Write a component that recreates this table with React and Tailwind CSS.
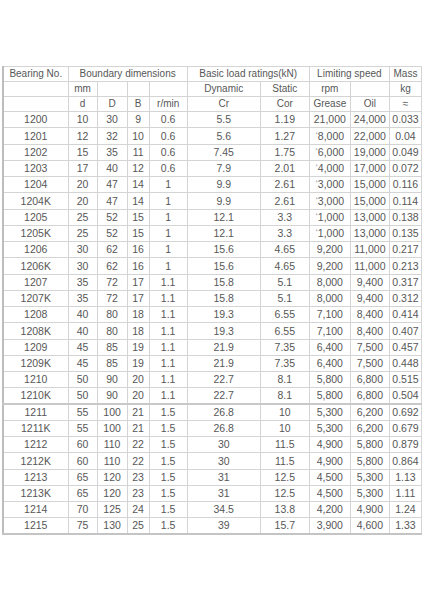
import React from "react";

const rows = [
  ["1200", "10", "30", "9", "0.6", "5.5", "1.19", "21,000", "24,000", "0.033"],
  ["1201", "12", "32", "10", "0.6", "5.6", "1.27", "18,000", "22,000", "0.04"],
  ["1202", "15", "35", "11", "0.6", "7.45", "1.75", "16,000", "19,000", "0.049"],
  ["1203", "17", "40", "12", "0.6", "7.9", "2.01", "14,000", "17,000", "0.072"],
  ["1204", "20", "47", "14", "1", "9.9", "2.61", "13,000", "15,000", "0.116"],
  ["1204K", "20", "47", "14", "1", "9.9", "2.61", "13,000", "15,000", "0.114"],
  ["1205", "25", "52", "15", "1", "12.1", "3.3", "11,000", "13,000", "0.138"],
  ["1205K", "25", "52", "15", "1", "12.1", "3.3", "11,000", "13,000", "0.135"],
  ["1206", "30", "62", "16", "1", "15.6", "4.65", "9,200", "11,000", "0.217"],
  ["1206K", "30", "62", "16", "1", "15.6", "4.65", "9,200", "11,000", "0.213"],
  ["1207", "35", "72", "17", "1.1", "15.8", "5.1", "8,000", "9,400", "0.317"],
  ["1207K", "35", "72", "17", "1.1", "15.8", "5.1", "8,000", "9,400", "0.312"],
  ["1208", "40", "80", "18", "1.1", "19.3", "6.55", "7,100", "8,400", "0.414"],
  ["1208K", "40", "80", "18", "1.1", "19.3", "6.55", "7,100", "8,400", "0.407"],
  ["1209", "45", "85", "19", "1.1", "21.9", "7.35", "6,400", "7,500", "0.457"],
  ["1209K", "45", "85", "19", "1.1", "21.9", "7.35", "6,400", "7,500", "0.448"],
  ["1210", "50", "90", "20", "1.1", "22.7", "8.1", "5,800", "6,800", "0.515"],
  ["1210K", "50", "90", "20", "1.1", "22.7", "8.1", "5,800", "6,800", "0.504"],
  ["1211", "55", "100", "21", "1.5", "26.8", "10", "5,300", "6,200", "0.692"],
  ["1211K", "55", "100", "21", "1.5", "26.8", "10", "5,300", "6,200", "0.679"],
  ["1212", "60", "110", "22", "1.5", "30", "11.5", "4,900", "5,800", "0.879"],
  ["1212K", "60", "110", "22", "1.5", "30", "11.5", "4,900", "5,800", "0.864"],
  ["1213", "65", "120", "23", "1.5", "31", "12.5", "4,500", "5,300", "1.13"],
  ["1213K", "65", "120", "23", "1.5", "31", "12.5", "4,500", "5,300", "1.11"],
  ["1214", "70", "125", "24", "1.5", "34.5", "13.8", "4,200", "4,900", "1.24"],
  ["1215", "75", "130", "25", "1.5", "39", "15.7", "3,900", "4,600", "1.33"],
];

const widths = [65, 29, 30, 22, 38, 73, 49, 41, 39, 32];

const td = "border border-[#d4d4d4] text-center p-0 leading-none whitespace-nowrap";
const th = td + " text-[10px]";

function Grease({ v, faded }) {
  if (faded && v.length === 6 && v[0] === "1") {
    return (
      <>
        <span className="text-[#a8a8a8]">{"\u2018"}</span>
        {v.slice(1)}
      </>
    );
  }
  return v;
}

export default function App() {
  return (
    <div className="w-[424px] h-[600px] bg-white pt-[66px] pl-[2px]">
      <table
        className="border-collapse table-fixed w-[420px] text-[10.5px] text-[#575757] border-l-2 border-b-2 border-l-[#bdbdbd] border-b-[#c4c4c4]"
        style={{ fontFamily: '"Liberation Sans", Arial, sans-serif' }}
      >
        <colgroup>
          {widths.map((w, i) => (
            <col key={i} style={{ width: w }} />
          ))}
        </colgroup>
        <tbody>
          <tr className="h-[15px]">
            <td className={th}>Bearing No.</td>
            <td className={th} colSpan={4}>Boundary dimensions</td>
            <td className={th} colSpan={2}>Basic load ratings(kN)</td>
            <td className={th} colSpan={2}>Limiting speed</td>
            <td className={th}>Mass</td>
          </tr>
          <tr className="h-[15px]">
            <td className={th}></td>
            <td className={th}>mm</td>
            <td className={th}></td>
            <td className={th}></td>
            <td className={th}></td>
            <td className={th}>Dynamic</td>
            <td className={th}>Static</td>
            <td className={th}>rpm</td>
            <td className={th}></td>
            <td className={th}>kg</td>
          </tr>
          <tr className="h-[15px]">
            <td className={th}></td>
            <td className={th}>d</td>
            <td className={th}>D</td>
            <td className={th}>B</td>
            <td className={th}>r/min</td>
            <td className={th}>Cr</td>
            <td className={th}>Cor</td>
            <td className={th}>Grease</td>
            <td className={th}>Oil</td>
            <td className={th}>≈</td>
          </tr>
          {rows.map((r, i) => (
            <tr
              key={r[0]}
              className={
                i === 18
                  ? "h-[16.25px] border-t-2 border-t-[#c8c8c8]"
                  : "h-[16.25px]"
              }
            >
              {r.map((c, j) => (
                <td key={j} className={td}>
                  {j === 7 ? <Grease v={c} faded={i >= 1 && i <= 7} /> : c}
                </td>
              ))}
            </tr>
          ))}
        </tbody>
      </table>
    </div>
  );
}
